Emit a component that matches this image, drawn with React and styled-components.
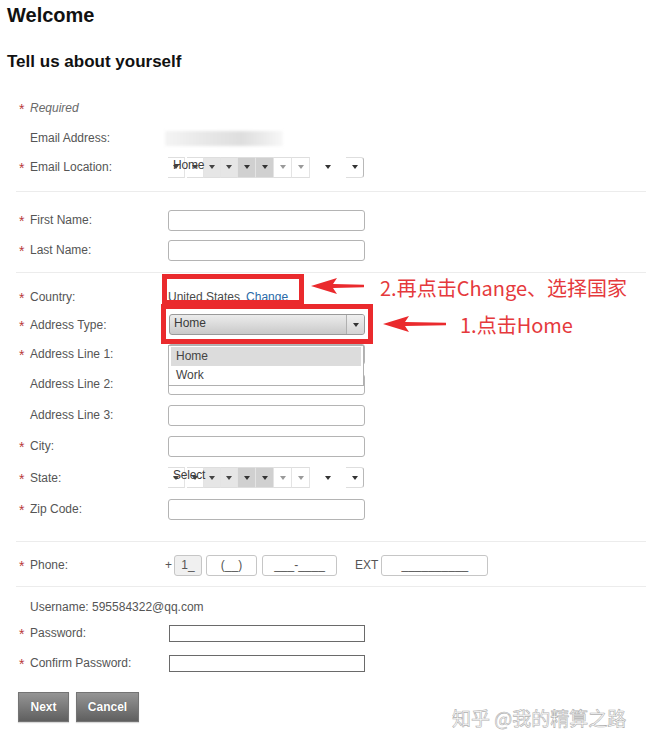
import React from "react";
import styled, { createGlobalStyle } from "styled-components";

const GlobalStyle = createGlobalStyle`
  html, body {
    margin: 0;
    padding: 0;
    background: #ffffff;
  }
  body {
    font-family: "Liberation Sans", Arial, sans-serif;
    font-size: 12px;
    color: #555555;
  }
`;

const Page = styled.div`
  position: relative;
  width: 646px;
  height: 746px;
  overflow: hidden;
  padding-top: 3px;
  box-sizing: border-box;
`;

const Title = styled.h1`
  margin: 0 0 0 7px;
  font-size: 20px;
  line-height: 24px;
  font-weight: bold;
  color: #111111;
`;

const Subtitle = styled.h2`
  margin: 24px 0 0 7px;
  font-size: 17px;
  line-height: 22px;
  font-weight: bold;
  color: #111111;
`;

const Section = styled.div`
  margin-top: ${(p) => p.$top}px;
  display: flex;
  flex-direction: column;
`;

const Divider = styled.div`
  margin: ${(p) => p.$top}px 0 0 16px;
  height: 1px;
  background: #ececec;
`;

const Row = styled.div`
  height: ${(p) => p.$h || 30}px;
  padding-left: 19px;
  display: grid;
  grid-template-columns: 11px 138px 1fr;
  align-items: center;
`;

const Star = styled.span`
  color: #b83a3a;
  font-size: 14px;
  line-height: 12px;
  align-self: center;
  margin-top: 2px;
`;

const Label = styled.span`
  font-style: ${(p) => (p.$italic ? "italic" : "normal")};
  color: ${(p) => (p.$italic ? "#6a6a6a" : "#555555")};
  white-space: nowrap;
`;

const WideLabel = styled.span`
  grid-column: 2 / 4;
  color: #555555;
`;

const Field = styled.div`
  position: relative;
  display: flex;
  align-items: center;
`;

const TextInput = styled.div`
  width: ${(p) => (p.$square ? 196 : 197)}px;
  height: ${(p) => (p.$square ? 17 : 21)}px;
  margin-left: ${(p) => (p.$square ? 1 : 0)}px;
  box-sizing: border-box;
  border: 1px solid ${(p) => (p.$square ? "#6a6a6a" : "#b4b4b4")};
  border-radius: ${(p) => (p.$square ? 0 : 3)}px;
  background: #ffffff;
`;

const BlurBox = styled.div`
  width: 118px;
  height: 15px;
  margin-left: -3px;
  background: linear-gradient(90deg, #f4f4f4 0%, #e9e9e9 30%, #dedede 65%, #ececec 85%, #f8f8f8 100%);
  filter: blur(1.5px);
`;

const Segments = styled.div`
  position: relative;
  display: flex;
  align-items: center;
  height: 21px;
`;

const Seg = styled.div`
  width: ${(p) => p.$w}px;
  height: 21px;
  margin-right: ${(p) => p.$gap || 0}px;
  box-sizing: border-box;
  background: ${(p) => p.$bg};
  border-top: 1px solid ${(p) => (p.$plain ? "transparent" : "#dedede")};
  border-bottom: 1px solid ${(p) => (p.$plain ? "transparent" : "#dedede")};
  border-right: 1px solid ${(p) => (p.$plain ? "transparent" : p.$edge || "#e4e4e4")};
  border-radius: ${(p) => (p.$last ? "0 3px 3px 0" : "0")};
  display: flex;
  align-items: center;
  justify-content: center;
`;

const Caret = styled.span`
  width: 0;
  height: 0;
  border-left: 3.5px solid transparent;
  border-right: 3.5px solid transparent;
  border-top: 4px solid ${(p) => p.$c || "#333333"};
`;

const SegText = styled.span`
  position: absolute;
  left: 5px;
  top: 1px;
  font-size: 12px;
  line-height: 14px;
  color: #3c3c3c;
  letter-spacing: -0.2px;
`;

const CountryText = styled.span`
  color: #4a4a4a;
  white-space: nowrap;
`;

const ChangeLink = styled.span`
  color: #2a6aa8;
  margin-left: 6px;
`;

const SelectWrap = styled.div`
  position: relative;
  margin-left: 1px;
`;

const SelectBox = styled.div`
  width: 196px;
  height: 21px;
  box-sizing: border-box;
  border: 1px solid #9a9a9a;
  border-radius: 3px;
  background: linear-gradient(#ececec, #c9c9c9);
  display: flex;
`;

const SelectText = styled.span`
  flex: 1;
  padding: 1px 0 0 4px;
  color: #3a3a3a;
  line-height: 14px;
`;

const SelectButton = styled.span`
  width: 17px;
  border-left: 1px solid #b0b0b0;
  display: flex;
  align-items: center;
  justify-content: center;
  background: linear-gradient(#f0f0f0, #d4d4d4);
  border-radius: 0 2px 2px 0;
`;

const Dropdown = styled.div`
  position: absolute;
  left: -1px;
  top: 31px;
  width: 196px;
  height: 41px;
  box-sizing: border-box;
  padding: 1px 2px;
  border: 1px solid #b0b0b0;
  background: #ffffff;
  z-index: 2;
`;

const Option = styled.div`
  height: 19px;
  line-height: 19px;
  padding-left: 5px;
  color: #444444;
  background: ${(p) => (p.$active ? "#dcdcdc" : "transparent")};
`;

const PhoneGroup = styled.div`
  display: flex;
  align-items: center;
  margin-left: -3px;
`;

const Plus = styled.span`
  color: #555555;
  margin-right: 2px;
`;

const PhoneBox = styled.div`
  width: ${(p) => p.$w}px;
  height: 21px;
  margin-right: ${(p) => p.$gap || 0}px;
  box-sizing: border-box;
  border: 1px solid #c6c6c6;
  border-radius: 3px;
  background: ${(p) => (p.$gray ? "#f0f0f0" : "#ffffff")};
  color: #555555;
  display: flex;
  align-items: center;
  justify-content: center;
  white-space: pre;
`;

const ExtLabel = styled.span`
  color: #555555;
  margin-right: 3px;
`;

const ButtonRow = styled.div`
  display: flex;
  gap: 7px;
  margin: 14px 0 0 18px;
`;

const Button = styled.div`
  width: ${(p) => p.$w}px;
  height: 30px;
  box-sizing: border-box;
  border: 1px solid #747474;
  background: linear-gradient(#959595, #5f5f5f);
  box-shadow: 0 1px 1px rgba(0, 0, 0, 0.15);
  color: #ffffff;
  font-weight: bold;
  font-size: 12px;
  display: flex;
  align-items: center;
  justify-content: center;
  text-shadow: 0 0 1px rgba(0, 0, 0, 0.3);
`;

const RedFrame = styled.div`
  position: absolute;
  left: ${(p) => p.$x}px;
  top: ${(p) => p.$y}px;
  width: ${(p) => p.$w}px;
  height: ${(p) => p.$h}px;
  box-sizing: border-box;
  border: 5px solid #ea2a2d;
  pointer-events: none;
`;

const ArrowSvg = styled.svg`
  position: absolute;
  left: ${(p) => p.$x}px;
  top: ${(p) => p.$y}px;
`;

const AnnoText = styled.div`
  position: absolute;
  left: ${(p) => p.$x}px;
  top: ${(p) => p.$y}px;
  font-family: "Noto Sans CJK SC", "Noto Sans", sans-serif;
  font-size: 20px;
  line-height: 26px;
  color: #e5393c;
  white-space: nowrap;
`;

const Watermark = styled.div`
  position: absolute;
  left: 452px;
  top: 704px;
  font-family: "Noto Sans CJK SC", sans-serif;
  font-size: 19px;
  line-height: 28px;
  color: #ffffff;
  -webkit-text-stroke: 0.6px #b0b0b0;
  white-space: nowrap;
`;

const segs = [
  { w: 17, gap: 2, bg: "#ffffff", c: "#444" },
  { w: 17, bg: "#ffffff", c: "#444" },
  { w: 17, bg: "#e6e6e6", c: "#444" },
  { w: 17, bg: "#e6e6e6", c: "#444" },
  { w: 18, bg: "#d0d0d0", c: "#333" },
  { w: 18, bg: "#d0d0d0", c: "#333" },
  { w: 18, bg: "#ffffff", c: "#9a9a9a" },
  { w: 18, bg: "#ffffff", c: "#9a9a9a" },
  { w: 36, bg: "transparent", c: "#333", plain: true },
  { w: 18, bg: "#ffffff", c: "#333", last: true, edge: "#b8b8b8" },
];

const BrokenSelect = ({ text }) => (
  <Segments>
    {segs.map((s, i) => (
      <Seg key={i} $w={s.w} $gap={s.gap} $bg={s.bg} $plain={s.plain} $last={s.last} $edge={s.edge}>
        <Caret $c={s.c} />
      </Seg>
    ))}
    <SegText>{text}</SegText>
  </Segments>
);

const Arrow = ({ x, y, len }) => (
  <ArrowSvg $x={x} $y={y} width={len} height={16} viewBox={`0 0 ${len} 16`}>
    <polygon
      points={`0,8 26,0 22,6 ${len},6.8 ${len},9.2 22,10 26,16`}
      fill="#ea2a2d"
    />
  </ArrowSvg>
);

const FormRow = ({ req, label, italic, h, children }) => (
  <Row $h={h}>
    {req ? <Star>*</Star> : <span />}
    <Label $italic={italic}>{label}</Label>
    <Field>{children}</Field>
  </Row>
);

export default function App() {
  return (
    <Page>
      <GlobalStyle />
      <Title>Welcome</Title>
      <Subtitle>Tell us about yourself</Subtitle>

      <Section $top={20}>
        <FormRow req label="Required" italic />
        <FormRow label="Email Address:">
          <BlurBox />
        </FormRow>
        <FormRow req label="Email Location:" h={28}>
          <BrokenSelect text="Home" />
        </FormRow>
      </Section>
      <Divider $top={10} />

      <Section $top={13}>
        <FormRow req label="First Name:">
          <TextInput />
        </FormRow>
        <FormRow req label="Last Name:">
          <TextInput />
        </FormRow>
      </Section>
      <Divider $top={7} />

      <Section $top={11}>
        <FormRow req label="Country:" h={26}>
          <CountryText>
            United States<ChangeLink>Change</ChangeLink>
          </CountryText>
        </FormRow>
        <FormRow req label="Address Type:" h={29}>
          <SelectWrap>
            <SelectBox>
              <SelectText>Home</SelectText>
              <SelectButton>
                <Caret />
              </SelectButton>
            </SelectBox>
            <Dropdown>
              <Option $active>Home</Option>
              <Option>Work</Option>
            </Dropdown>
          </SelectWrap>
        </FormRow>
        <FormRow req label="Address Line 1:">
          <TextInput />
        </FormRow>
        <FormRow label="Address Line 2:">
          <TextInput />
        </FormRow>
        <FormRow label="Address Line 3:" h={32}>
          <TextInput />
        </FormRow>
        <FormRow req label="City:">
          <TextInput />
        </FormRow>
        <FormRow req label="State:" h={33}>
          <BrokenSelect text="Select" />
        </FormRow>
        <FormRow req label="Zip Code:">
          <TextInput />
        </FormRow>
      </Section>
      <Divider $top={17} />

      <Section $top={8}>
        <FormRow req label="Phone:">
          <PhoneGroup>
            <Plus>+</Plus>
            <PhoneBox $w={28} $gap={4} $gray>1_</PhoneBox>
            <PhoneBox $w={51} $gap={5}>(__)</PhoneBox>
            <PhoneBox $w={75} $gap={18}>___-____</PhoneBox>
            <ExtLabel>EXT</ExtLabel>
            <PhoneBox $w={107}>__________</PhoneBox>
          </PhoneGroup>
        </FormRow>
      </Section>
      <Divider $top={6} />

      <Section $top={8}>
        <Row $h={23}>
          <span />
          <WideLabel>Username: 595584322@qq.com</WideLabel>
        </Row>
        <FormRow req label="Password:">
          <TextInput $square />
        </FormRow>
        <FormRow req label="Confirm Password:">
          <TextInput $square />
        </FormRow>
      </Section>

      <ButtonRow>
        <Button $w={51}>Next</Button>
        <Button $w={63}>Cancel</Button>
      </ButtonRow>

      <RedFrame $x={162} $y={274} $w={142} $h={31} />
      <RedFrame $x={161} $y={304} $w={212} $h={40} />
      <Arrow x={311} y={278} len={53} />
      <Arrow x={383} y={316} len={63} />
      <AnnoText $x={380} $y={275}>2.再点击Change、选择国家</AnnoText>
      <AnnoText $x={460} $y={312}>1.点击Home</AnnoText>

      <Watermark>知乎 @我的精算之路</Watermark>
    </Page>
  );
}
